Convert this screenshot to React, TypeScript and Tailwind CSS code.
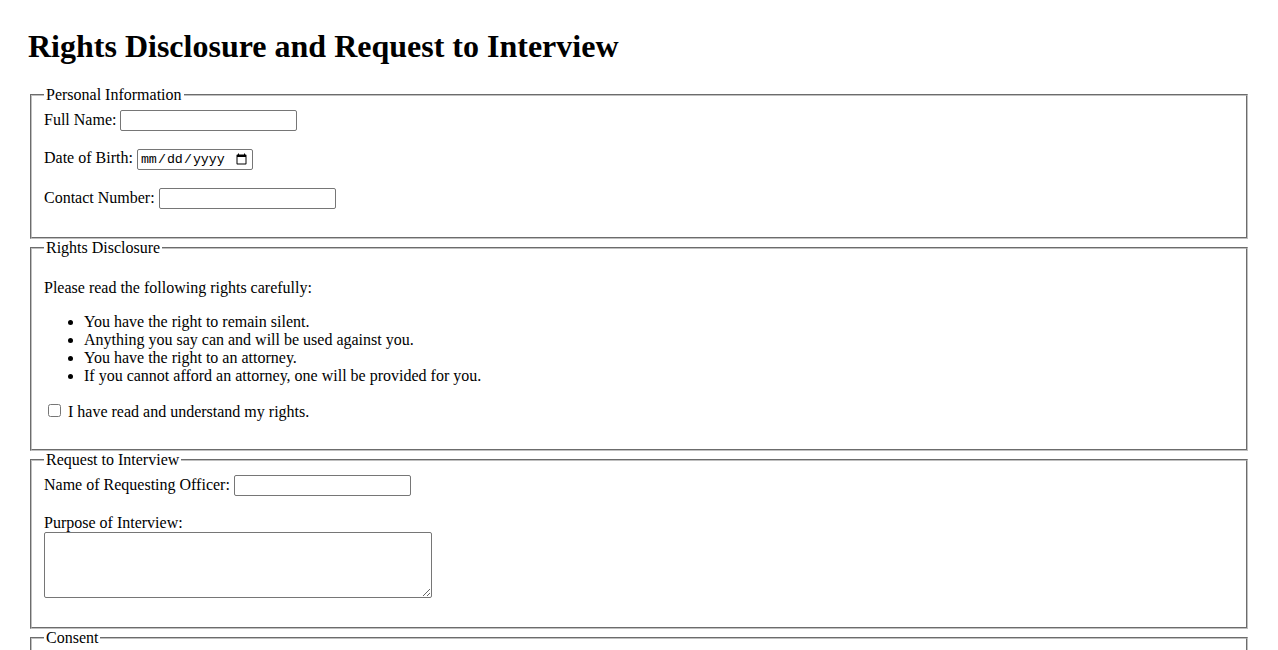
export default function App() {
  const fieldset = "mx-[2px] border-2 [border-style:groove] border-[#c0c0c0] px-3 min-w-0"
  const legend = "px-[2px]"
  const textInput =
    "w-[177px] h-[21px] align-baseline border border-[#767676] rounded-[2px] px-[2px] py-[1px] bg-white text-[13.33px] font-['Liberation_Sans',Arial,sans-serif]"

  return (
    <div className="min-h-screen bg-white p-[28px] pt-[28px] text-black text-[16px] leading-[normal] font-['Liberation_Serif','Times_New_Roman',serif]">
      <h1 className="text-[32px] font-bold mt-0 mb-[21.44px]">Rights Disclosure and Request to Interview</h1>

      <form>
        {/* personal info */}
        <fieldset className={`${fieldset} pt-[5.6px] pb-[10px]`}>
          <legend className={legend}>Personal Information</legend>
          <label htmlFor="fullName">Full Name:</label>{" "}
          <input id="fullName" type="text" className={textInput} />
          <br />
          <br />
          <label htmlFor="dob">Date of Birth:</label>{" "}
          <input
            id="dob"
            type="date"
            className="w-[116px] h-[21px] border border-[#767676] rounded-[2px] px-[2px] py-[1px] bg-white text-[13.33px] font-['Liberation_Mono',monospace]"
          />
          <br />
          <br />
          <label htmlFor="contact">Contact Number:</label>{" "}
          <input id="contact" type="tel" className={textInput} />
          <br />
          <br />
        </fieldset>

        {/* rights */}
        <fieldset className={`${fieldset} pt-[5.6px] pb-[12px]`}>
          <legend className={legend}>Rights Disclosure</legend>
          <p className="my-4">Please read the following rights carefully:</p>
          <ul className="my-4 pl-10 list-disc">
            <li>You have the right to remain silent.</li>
            <li>Anything you say can and will be used against you.</li>
            <li>You have the right to an attorney.</li>
            <li>If you cannot afford an attorney, one will be provided for you.</li>
          </ul>
          <p className="my-4">
            <input id="understand" type="checkbox" className="ml-1 mr-[3px] my-[3px] w-[13px] h-[13px] align-baseline" />
            <label htmlFor="understand"> I have read and understand my rights.</label>
          </p>
        </fieldset>

        {/* interview */}
        <fieldset className={`${fieldset} pt-[6.6px] pb-[11px]`}>
          <legend className={legend}>Request to Interview</legend>
          <label htmlFor="officer">Name of Requesting Officer:</label>{" "}
          <input id="officer" type="text" className={textInput} />
          <br />
          <br />
          <label htmlFor="purpose">Purpose of Interview:</label>
          <br />
          <textarea
            id="purpose"
            className="w-[388px] h-[66px] align-bottom border border-[#767676] rounded-[2px] px-[2px] py-[2px] bg-white text-[13.33px] font-['Liberation_Mono',monospace]"
          />
          <br />
          <br />
        </fieldset>

        <fieldset className={`${fieldset} pt-[5.6px] pb-[10px]`}>
          <legend className={legend}>Consent</legend>
          <p className="my-4">
            <input id="consent" type="checkbox" className="ml-1 mr-[3px] my-[3px] w-[13px] h-[13px] align-baseline" />
            <label htmlFor="consent"> I consent to be interviewed.</label>
          </p>
          <label htmlFor="sig">Signature:</label>{" "}
          <input id="sig" type="text" className={textInput} />
          <br />
          <br />
          <button type="submit" className="border border-[#767676] rounded-[2px] bg-[#efefef] px-[6px] py-[1px] text-[13.33px] font-['Liberation_Sans',Arial,sans-serif]">
            Submit
          </button>
        </fieldset>
      </form>
    </div>
  )
}
